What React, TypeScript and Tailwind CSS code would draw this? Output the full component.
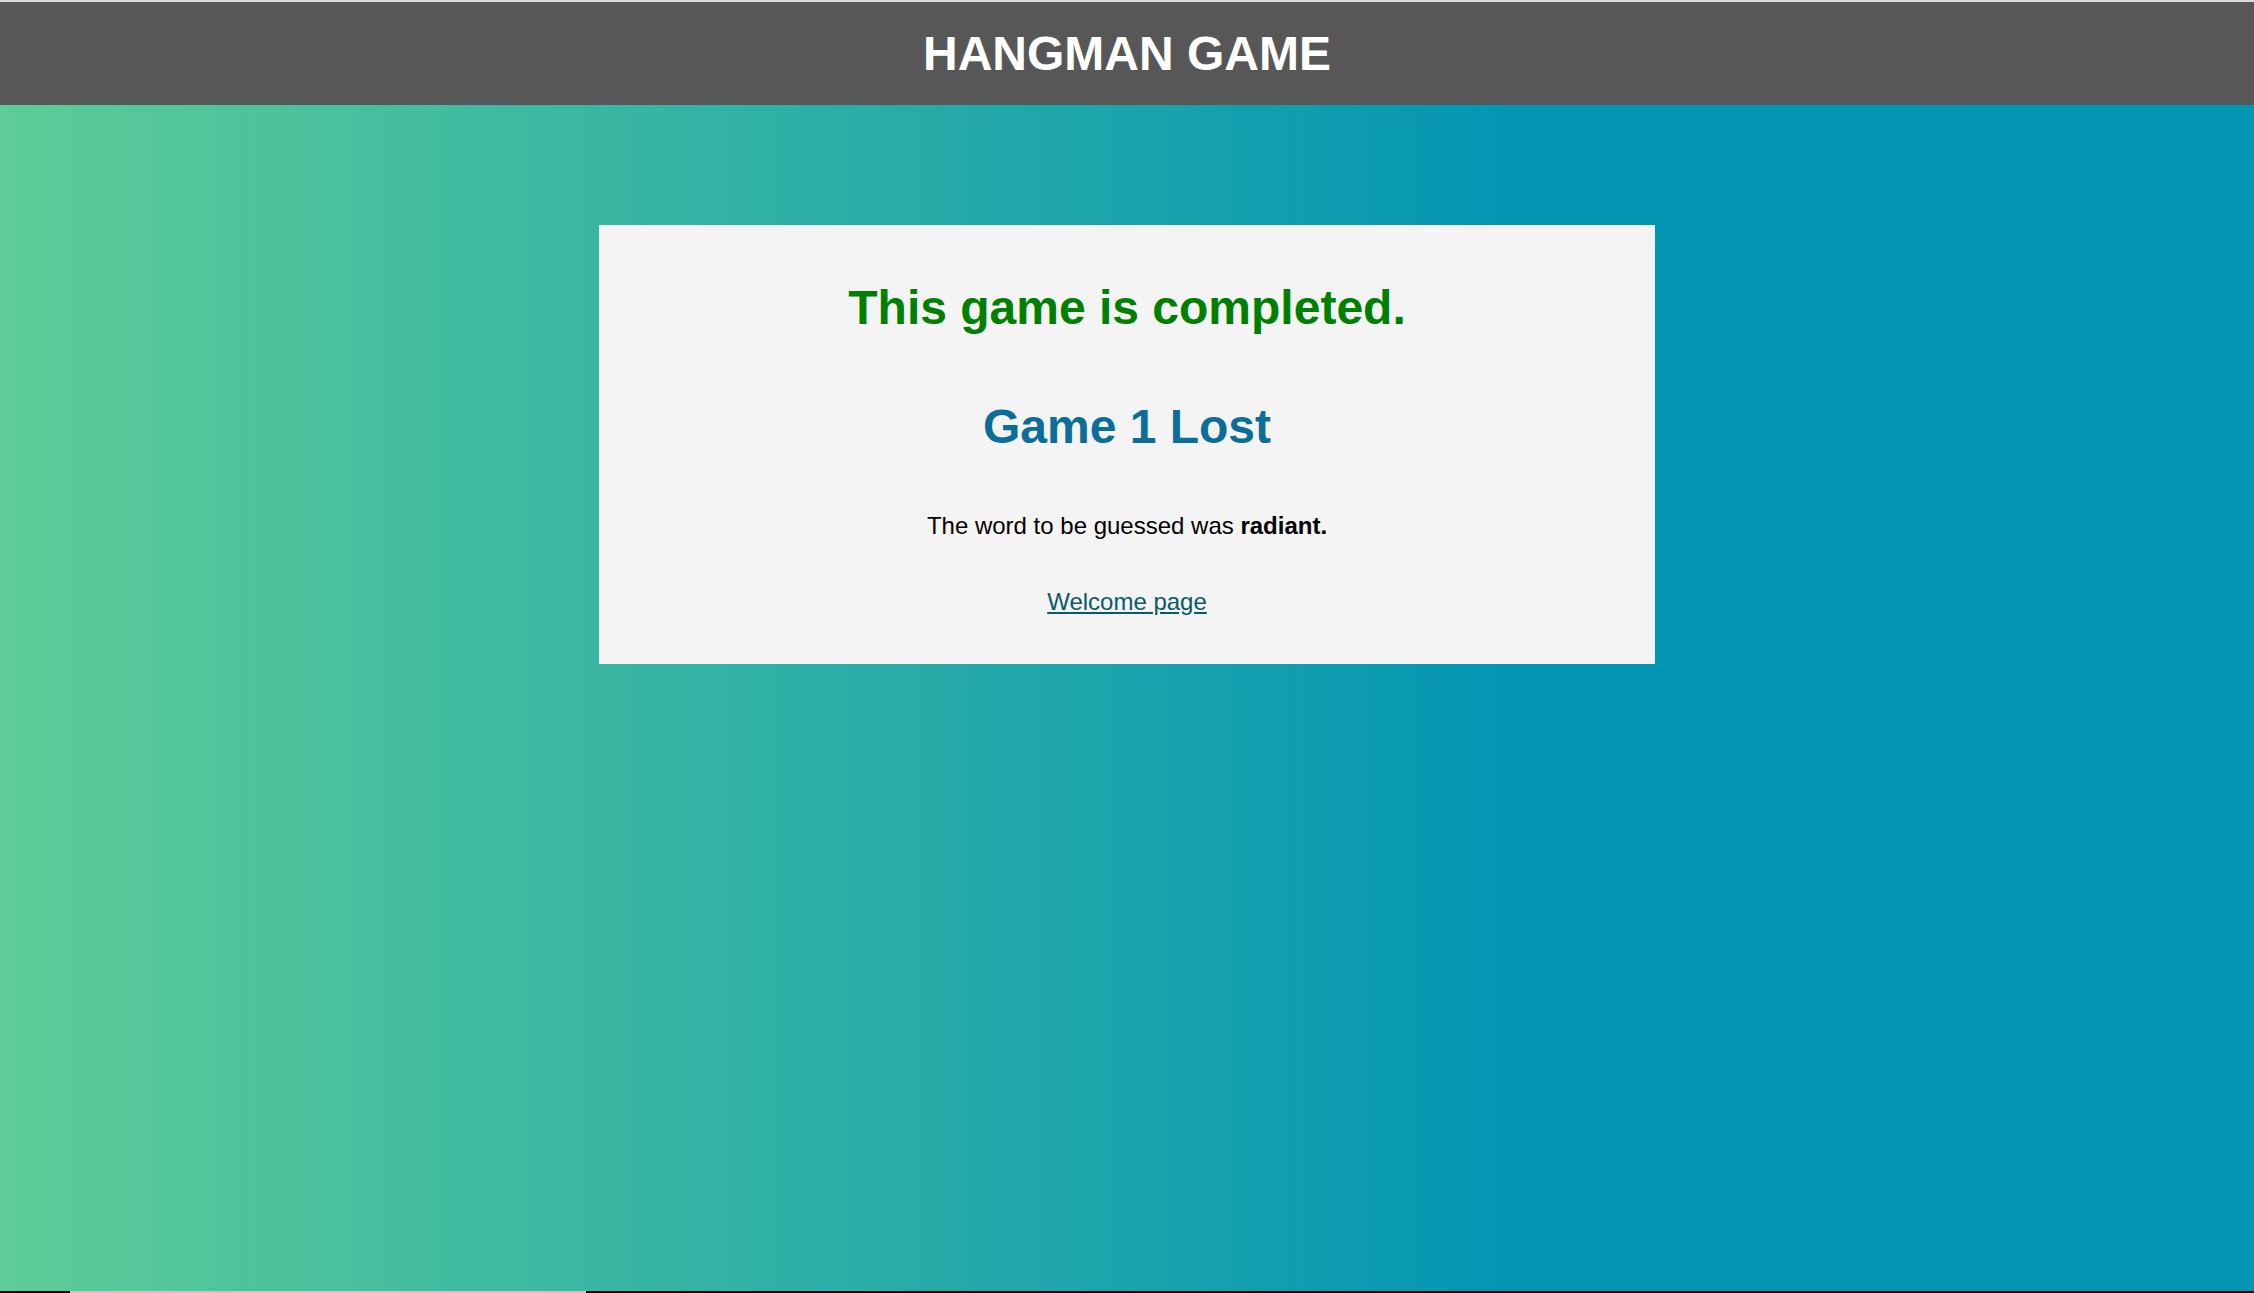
export default function App() {
  return (
    <div className="flex h-screen flex-col font-['Liberation_Sans',Arial,sans-serif]">
      <div className="h-[2px] bg-[#dadada]" />
      <header className="flex h-[103px] items-center justify-center bg-[#575757]">
        <h1 className="text-[48px] font-bold leading-none text-white">HANGMAN GAME</h1>
      </header>

      <main className="flex flex-1 justify-center bg-[linear-gradient(to_right,#5dcc97_0%,#0396b3_67%,#0395b3_100%)] pt-[120px]">
        <div className="h-[439px] w-[1056px] bg-[#f4f4f4] pt-[55px] text-center">
          <h2 className="text-[48px] font-bold leading-[55px] text-[#008000]">This game is completed.</h2>
          <h2 className="mt-[64px] text-[48px] font-bold leading-[55px] text-[#0b6d9a]">Game 1 Lost</h2>
          <p className="mt-[58px] text-[24px] leading-[28px] text-black">
            The word to be guessed was <b className="font-bold">radiant.</b>
          </p>
          <p className="mt-[48px] text-[24px] leading-[28px]">
            <a href="#" className="text-[#0b5a6a] underline">
              Welcome page
            </a>
          </p>
        </div>
      </main>

      <div className="flex h-[2px] bg-black">
        <div className="ml-[70px] w-[516px] bg-[#c8c8c8]" />
      </div>
    </div>
  )
}
